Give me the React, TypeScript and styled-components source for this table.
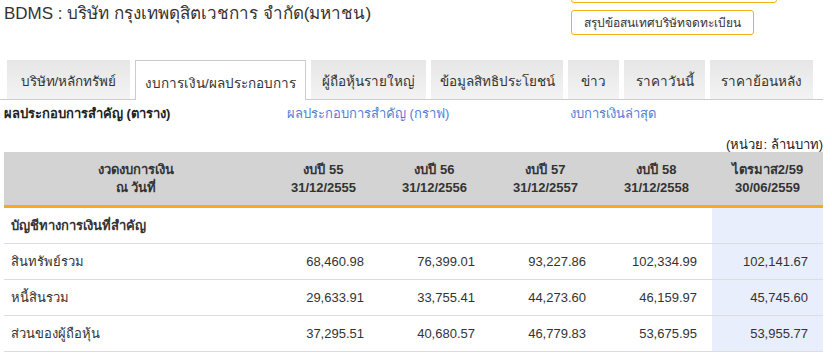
import React from "react";
import styled, { createGlobalStyle } from "styled-components";

const GlobalStyle = createGlobalStyle`
  html, body {
    margin: 0;
    padding: 0;
    background: #ffffff;
    overflow: hidden;
  }
  body {
    font-family: "Liberation Sans", Tahoma, "Noto Sans", sans-serif;
    color: #333333;
  }
`;

interface ITab {
  label: string;
  width: number;
  active?: boolean;
}

const tabs: ITab[] = [
  { label: "บริษัท/หลักทรัพย์", width: 123 },
  { label: "งบการเงิน/ผลประกอบการ", width: 171, active: true },
  { label: "ผู้ถือหุ้นรายใหญ่", width: 115 },
  { label: "ข้อมูลสิทธิประโยชน์", width: 132 },
  { label: "ข่าว", width: 51 },
  { label: "ราคาวันนี้", width: 81 },
  { label: "ราคาย้อนหลัง", width: 103 },
];

const periods = [
  { title: "งบปี 55", date: "31/12/2555" },
  { title: "งบปี 56", date: "31/12/2556" },
  { title: "งบปี 57", date: "31/12/2557" },
  { title: "งบปี 58", date: "31/12/2558" },
  { title: "ไตรมาส2/59", date: "30/06/2559" },
];

const rows = [
  {
    label: "สินทรัพย์รวม",
    values: ["68,460.98", "76,399.01", "93,227.86", "102,334.99", "102,141.67"],
  },
  {
    label: "หนี้สินรวม",
    values: ["29,633.91", "33,755.41", "44,273.60", "46,159.97", "45,745.60"],
  },
  {
    label: "ส่วนของผู้ถือหุ้น",
    values: ["37,295.51", "40,680.57", "46,779.83", "53,675.95", "53,955.77"],
  },
];

export default function App() {
  const lastIndex = periods.length - 1;

  return (
    <Page>
      <GlobalStyle />
      <TopBar>
        <Title>BDMS : บริษัท กรุงเทพดุสิตเวชการ จำกัด(มหาชน)</Title>
        <ButtonStack>
          {/* the first button is scrolled above the fold, only its border shows */}
          <OutlineButton $width={206} />
          <OutlineButton $width={183}>สรุปข้อสนเทศบริษัทจดทะเบียน</OutlineButton>
        </ButtonStack>
      </TopBar>

      <TabBar>
        {tabs.map((tab) => (
          <Tab key={tab.label} $width={tab.width} $active={!!tab.active}>
            {tab.label}
          </Tab>
        ))}
      </TabBar>

      <InfoRow>
        <SectionLabel>ผลประกอบการสำคัญ (ตาราง)</SectionLabel>
        <SectionLink>ผลประกอบการสำคัญ (กราฟ)</SectionLink>
        <SectionLink>งบการเงินล่าสุด</SectionLink>
      </InfoRow>

      <UnitLabel>(หน่วย: ล้านบาท)</UnitLabel>

      <Table>
        <colgroup>
          <col style={{ width: 264 }} />
          {periods.map((p) => (
            <col key={p.date} style={{ width: 111 }} />
          ))}
        </colgroup>
        <thead>
          <tr>
            <HeadCell>
              งวดงบการเงิน
              <br />
              ณ วันที่
            </HeadCell>
            {periods.map((p) => (
              <HeadCell key={p.date}>
                {p.title}
                <br />
                {p.date}
              </HeadCell>
            ))}
          </tr>
        </thead>
        <tbody>
          <tr>
            <GroupCell>บัญชีทางการเงินที่สำคัญ</GroupCell>
            {periods.map((p, i) => (
              <ValueCell key={p.date} $highlight={i === lastIndex} />
            ))}
          </tr>
          {rows.map((row) => (
            <tr key={row.label}>
              <LabelCell>{row.label}</LabelCell>
              {row.values.map((v, i) => (
                <ValueCell key={i} $highlight={i === lastIndex}>
                  {v}
                </ValueCell>
              ))}
            </tr>
          ))}
        </tbody>
      </Table>
    </Page>
  );
}

const Page = styled.div`
  width: 823px;
`;

const TopBar = styled.div`
  display: grid;
  grid-template-columns: 571px auto;
  height: 60px;
`;

const Title = styled.div`
  padding: 3px 0 0 4px;
  font-size: 17px;
  line-height: 21px;
  color: #333333;
`;

const ButtonStack = styled.div`
  display: flex;
  flex-direction: column;
  gap: 7px;
  margin-top: -22px;
`;

const OutlineButton = styled.div<{ $width: number }>`
  box-sizing: border-box;
  width: ${(p) => p.$width}px;
  height: 25px;
  border: 1px solid #f0b418;
  border-radius: 3px;
  display: flex;
  align-items: center;
  justify-content: center;
  font-size: 12px;
  color: #333333;
  background: #ffffff;
`;

const TabBar = styled.div`
  display: flex;
  gap: 5px;
  padding-left: 7px;
  height: 39px;
  border-bottom: 1px solid #cccccc;
`;

const Tab = styled.div<{ $width: number; $active: boolean }>`
  box-sizing: border-box;
  width: ${(p) => p.$width}px;
  height: ${(p) => (p.$active ? 40 : 39)}px;
  display: flex;
  align-items: center;
  justify-content: center;
  font-size: 13.5px;
  color: #333333;
  white-space: nowrap;
  background: ${(p) =>
    p.$active ? "#ffffff" : "linear-gradient(to bottom, #e6e6e6, #f3f3f3)"};
  border: ${(p) => (p.$active ? "1px solid #cccccc" : "none")};
  border-bottom: none;
  padding-top: ${(p) => (p.$active ? 5 : 2)}px;
`;

const InfoRow = styled.div`
  display: grid;
  grid-template-columns: 283px 283px 1fr;
  padding: 6px 0 0 4px;
  height: 24px;
  font-size: 13px;
  line-height: 16px;
`;

const SectionLabel = styled.div`
  font-weight: bold;
  color: #222222;
`;

const SectionLink = styled.div`
  color: #4f80d6;
`;

const UnitLabel = styled.div`
  text-align: right;
  font-size: 13px;
  line-height: 16px;
  padding-top: 7px;
  height: 15px;
  color: #222222;
`;

const Table = styled.table`
  margin-left: 4px;
  width: 819px;
  border-collapse: collapse;
  table-layout: fixed;
  font-size: 13px;
`;

const HeadCell = styled.th`
  height: 53px;
  padding: 0;
  background: #d3d3d3;
  border-bottom: 3px solid #f8a823;
  font-weight: bold;
  line-height: 18px;
  text-align: center;
  color: #333333;
`;

const LabelCell = styled.td`
  height: 35px;
  padding: 0 0 0 7px;
  border-bottom: 1px solid #dddddd;
  color: #333333;
`;

const GroupCell = styled(LabelCell)`
  font-weight: bold;
`;

const ValueCell = styled.td<{ $highlight: boolean }>`
  height: 35px;
  padding: 0 15px 0 0;
  text-align: right;
  border-bottom: 1px solid #dddddd;
  background: ${(p) => (p.$highlight ? "#e8eefc" : "transparent")};
  color: #333333;
`;
